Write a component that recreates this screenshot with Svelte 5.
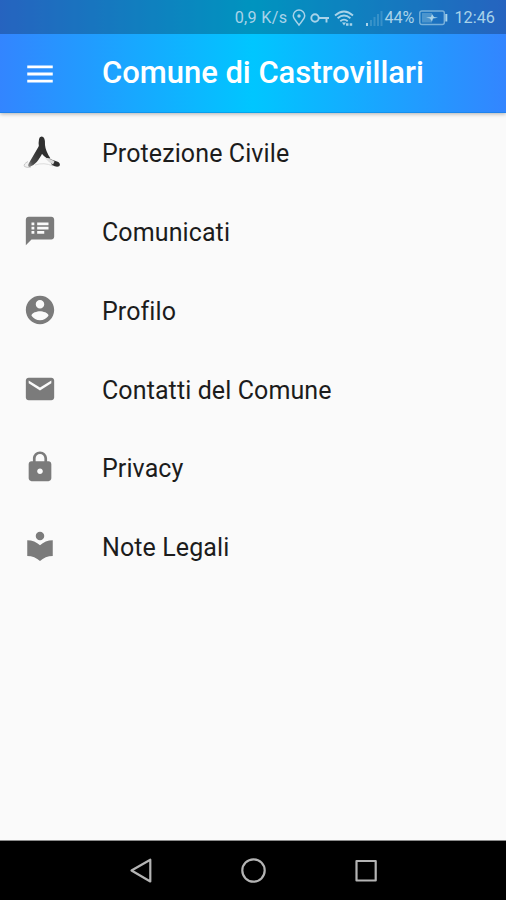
<script>
  const items = [
    { label: 'Protezione Civile', icon: 'civil' },
    { label: 'Comunicati', icon: 'M20 2H4c-1.1 0-1.99.9-1.99 2L2 22l4-4h14c1.1 0 2-.9 2-2V4c0-1.1-.9-2-2-2zM8 14H6v-2h2v2zm0-3H6V9h2v2zm0-3H6V6h2v2zm7 6h-5v-2h5v2zm3-3h-8V9h8v2zm0-3h-8V6h8v2z' },
    { label: 'Profilo', icon: 'M12 2C6.48 2 2 6.48 2 12s4.48 10 10 10 10-4.48 10-10S17.52 2 12 2zm0 3c1.66 0 3 1.34 3 3s-1.34 3-3 3-3-1.34-3-3 1.34-3 3-3zm0 14.2c-2.5 0-4.71-1.28-6-3.22.03-1.99 4-3.08 6-3.08 1.99 0 5.97 1.09 6 3.08-1.29 1.94-3.5 3.22-6 3.22z' },
    { label: 'Contatti del Comune', icon: 'M20 4H4c-1.1 0-1.99.9-1.99 2L2 18c0 1.1.9 2 2 2h16c1.1 0 2-.9 2-2V6c0-1.1-.9-2-2-2zm0 4l-8 5-8-5V6l8 5 8-5v2z' },
    { label: 'Privacy', icon: 'M18 8h-1V6c0-2.76-2.24-5-5-5S7 3.24 7 6v2H6c-1.1 0-2 .9-2 2v10c0 1.1.9 2 2 2h12c1.1 0 2-.9 2-2V10c0-1.1-.9-2-2-2zm-6 9c-1.1 0-2-.9-2-2s.9-2 2-2 2 .9 2 2-.9 2-2 2zm3.1-9H8.9V6c0-1.71 1.39-3.1 3.1-3.1 1.71 0 3.1 1.39 3.1 3.1v2z' },
    { label: 'Note Legali', icon: 'M12 11.55C9.64 9.35 6.48 8 3 8v11c3.48 0 6.64 1.35 9 3.55 2.36-2.19 5.52-3.55 9-3.55V8c-3.48 0-6.64 1.35-9 3.55zM12 8c1.66 0 3-1.34 3-3s-1.34-3-3-3-3 1.34-3 3 1.34 3 3 3z' }
  ];
</script>

<div class="screen">
  <header>
    <div class="status">
      <span class="speed">0,9 K/s</span>
      <svg class="pin" width="14" height="18" viewBox="0 0 14 18" fill="none" stroke="currentColor" stroke-width="1.5"><path d="M7 16C5.4 13.6 1.3 10 1.3 6.8a5.7 5.7 0 0 1 11.4 0C12.7 10 8.600 13.600 7 16z" /><circle cx="7" cy="7" r="1.7" fill="currentColor" stroke="none" /></svg>
      <svg class="key" width="20" height="12" viewBox="0 0 20 12" fill="none" stroke="currentColor" stroke-width="1.9"><circle cx="5" cy="6" r="3.7" /><path d="M8.700 6H19M16.500 6v4.500" /></svg>
      <svg class="wifi" width="20" height="17" viewBox="0 0 20 17" fill="none" stroke="currentColor" stroke-width="1.8"><path d="M1 5.500Q10-2.500 19 5.500M3.600 8.300Q10 2.800 16.400 8.300M6.300 11.200Q10 8 13.700 11.200" /><path d="M8 12.500h4l-2 3z" fill="currentColor" stroke="none" /><path d="M12 14.500h2.500M15.700 14.500h2.500" stroke-width="2.500" /></svg>
      <svg class="signal" width="18" height="17" viewBox="0 0 18 17" fill="currentColor"><path d="M1 13h2v3H1z" /><path opacity=".25" d="M5 10h2v6H5zM8.500 7h2v9h-2zM12 4h2v12h-2zM15.500 1h2v15h-2z" /></svg>
      <span class="percent">44%</span>
      <svg class="battery" width="29" height="16" viewBox="0 0 29 16"><rect x=".8" y="1" width="24.500" height="13.500" rx="2" fill="none" stroke="currentColor" stroke-width="1.4" opacity=".65" /><path d="M3 3h10v9.500H3z" fill="currentColor" opacity=".35" /><path d="M27.300 4v7.500" stroke="currentColor" stroke-width="2" /><path d="M7 7.500l5-.5 1-3 2 3 4 .8-5 .8-1 3-2-3z" fill="currentColor" /></svg>
      <span class="clock">12:46</span>
    </div>
    <div class="toolbar">
      <button aria-label="Menu"><svg width="34" height="34" viewBox="0 0 24 24" fill="#fff"><path d="M3 18h18v-2H3v2zm0-5h18v-2H3v2zm0-7v2h18V6H3z" /></svg></button>
      <h1>Comune di Castrovillari</h1>
    </div>
  </header>

  <main>
    {#each items as item}
      <div class="row">
        {#if item.icon === 'civil'}
          <svg class="civil" width="38" height="38" viewBox="0 0 38 38">
            <defs><linearGradient id="arm" x1="1" y1="0" x2="0" y2="1"><stop offset=".35" stop-color="#333" /><stop offset=".75" stop-color="#4b4b4b" /><stop offset="1" stop-color="#999" /></linearGradient></defs>
            <path d="M5 28.500Q0 31 1.500 33.500Q3.500 35 8 34" fill="#f1f1f1" stroke="#bbb" stroke-width=".8" />
            <path d="M6 30L16.500 12L19.500 20C16 27 12 32 6.500 34Q4 33 6 30z" fill="url(#arm)" />
            <path d="M16 15Q14.500 3.500 18.500 3.500Q22.500 3.500 22 12Q22.500 18 27.500 25.500L23.500 25Q18.500 22 16 15z" fill="#303030" />
            <path d="M12 32Q21 29 30 33" fill="none" stroke="#ddd" stroke-width="1" />
            <path d="M25.500 25.500L34 28.500Q38 30 36.500 33Q34 35 29 32z" fill="#303030" />
            <path d="M22 25Q28 25.500 31.500 28.500L30 31.500Q25 29 22 25z" fill="#ddd" />
          </svg>
        {:else}
          <svg width="34" height="34" viewBox="0 0 24 24" fill="#7b7b7b"><path d={item.icon} /></svg>
        {/if}
        <span>{item.label}</span>
      </div>
    {/each}
  </main>

  <nav>
    <svg width="506" height="59" viewBox="0 0 506 59" fill="none" stroke="#b4b4b4" stroke-width="2.200" stroke-linejoin="round">
      <path d="M131.500 29.500L150.300 18.700V40.500z" />
      <circle cx="253.500" cy="29.500" r="11.200" />
      <rect x="356.500" y="20" width="19.200" height="19.500" />
    </svg>
  </nav>
</div>

<style>
  :global(body) { background: #fafafa; }
  .screen { width: 506px; height: 900px; display: flex; flex-direction: column; overflow: hidden; background: #fafafa; font-family: Roboto, "Noto Sans", sans-serif; }
  header { height: 113px; flex: none; background: linear-gradient(90deg, #3385ff 0%, #00c6ff 50%, #3385ff 100%); box-shadow: inset 0 -1px #0878d166, 0 1px 4px #0000004d; }
  .status { height: 34px; display: flex; align-items: center; justify-content: flex-end; padding: 2px 11px 0 0; box-sizing: border-box; background: #00000040; color: #a9d3e9; font-size: 16.200px; line-height: 32px; white-space: nowrap; }
  .speed { letter-spacing: .3px; margin-right: 5px; }
  .pin { margin-right: 4px; }
  .key { margin-right: 4px; }
  .wifi { margin-right: 11px; }
  .signal { margin-right: 1px; }
  .percent { margin-right: 5px; }
  .battery { margin-right: 6px; margin-left: 0; }
  .clock { letter-spacing: .05px; }
  .toolbar { height: 79px; display: flex; align-items: center; padding-left: 23px; }
  button { display: flex; padding: 0; border: 0; background: none; }
  h1 { margin: 0 0 2px 45px; color: #fff; font-size: 31px; line-height: 40px; font-weight: 500; letter-spacing: -.03px; white-space: nowrap; }
  main { flex: 1; min-height: 0; }
  .row { height: 78.75px; display: flex; align-items: center; padding-left: 23px; box-sizing: border-box; }
  .row svg { flex: none; }
  .row .civil { margin-bottom: 1px; }
  .row span { margin: 4px 0 0 45px; color: #1c1c1c; font-size: 25px; line-height: 32px; letter-spacing: .1px; white-space: nowrap; }
  .row .civil + span { margin-left: 41px; }
  nav { height: 60px; flex: none; background: #000; border-top: 1px solid #8b8b8b; box-sizing: border-box; }
  nav svg { display: block; }
</style>
